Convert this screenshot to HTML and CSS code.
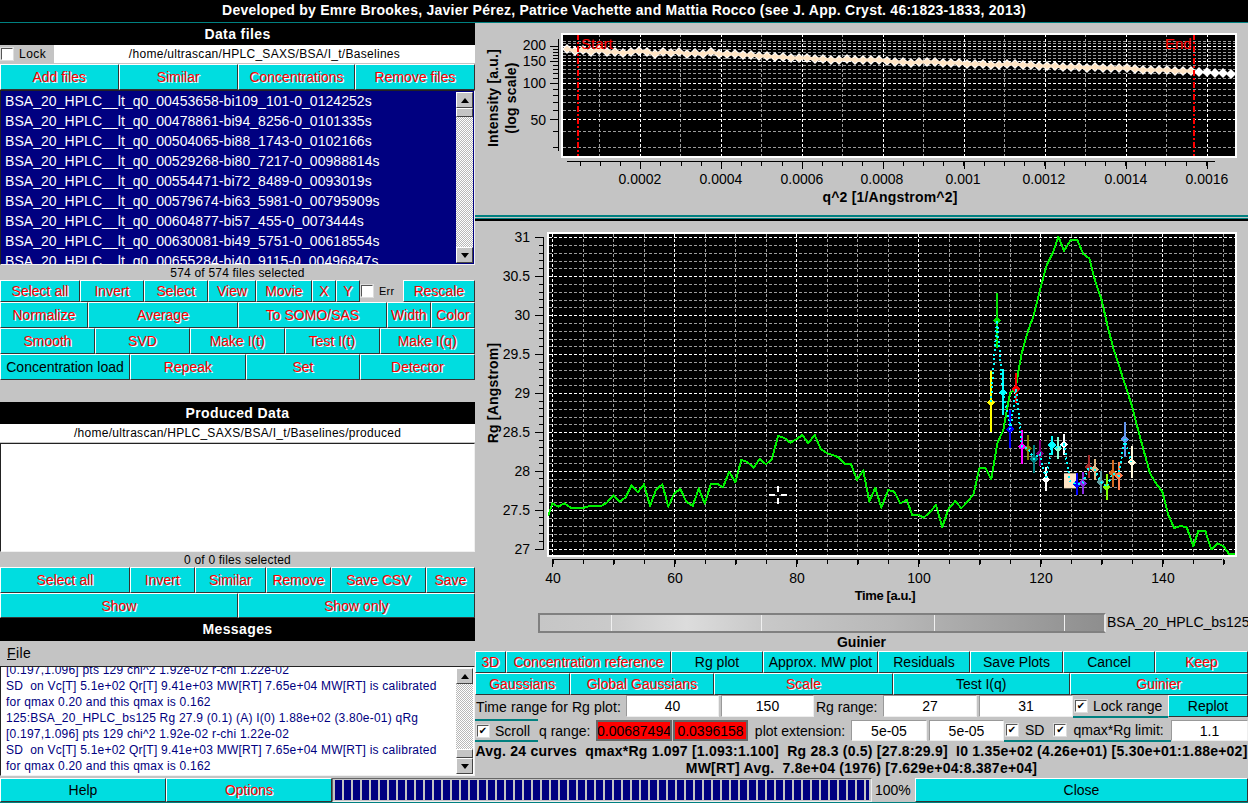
FILE: index.html
```html
<!DOCTYPE html>
<html lang="en">
<head>
<meta charset="utf-8">
<title>HPLC-SAXS</title>
<link rel="stylesheet" href="styles.css">
</head>
<body>
<div class="app">
  <header class="topbar">Developed by Emre Brookes, Javier Pérez, Patrice Vachette and Mattia Rocco (see J. App. Cryst. 46:1823-1833, 2013)</header>
  <div class="middle">
    <section class="left">
      <h2 class="bar bar-data">Data files</h2>
      <div class="lockrow">
        <label class="check lockcheck"><span class="chk"></span>Lock</label>
        <div class="pathline">/home/ultrascan/HPLC_SAXS/BSA/I_t/Baselines</div>
      </div>
      <div class="btnrow r-a">
        <button class="off">Add files</button><button class="off">Similar</button><button class="off">Concentrations</button><button class="off">Remove files</button>
      </div>
      <div class="listbox files">
        <div class="listtext">
          <div>BSA_20_HPLC__lt_q0_00453658-bi109_101-0_0124252s</div>
          <div>BSA_20_HPLC__lt_q0_00478861-bi94_8256-0_0101335s</div>
          <div>BSA_20_HPLC__lt_q0_00504065-bi88_1743-0_0102166s</div>
          <div>BSA_20_HPLC__lt_q0_00529268-bi80_7217-0_00988814s</div>
          <div>BSA_20_HPLC__lt_q0_00554471-bi72_8489-0_0093019s</div>
          <div>BSA_20_HPLC__lt_q0_00579674-bi63_5981-0_00795909s</div>
          <div>BSA_20_HPLC__lt_q0_00604877-bi57_455-0_0073444s</div>
          <div>BSA_20_HPLC__lt_q0_00630081-bi49_5751-0_00618554s</div>
          <div>BSA_20_HPLC__lt_q0_00655284-bi40_9115-0_00496847s</div>
        </div>
        <div class="vscroll">
          <span class="arrow up"></span><span class="thumb"></span><span class="track"></span><span class="arrow down"></span>
        </div>
      </div>
      <div class="status">574 of 574 files selected</div>
      <div class="btnrow r-b">
        <button class="off">Select all</button><button class="off">Invert</button><button class="off">Select</button><button class="off">View</button><button class="off">Movie</button><button class="off">X</button><button class="off">Y</button>
        <label class="check errcheck"><span class="chk"></span>Err</label>
        <button class="off">Rescale</button>
      </div>
      <div class="btnrow r-c">
        <button class="off">Normalize</button><button class="off">Average</button><button class="off">To SOMO/SAS</button><button class="off">Width</button><button class="off">Color</button>
      </div>
      <div class="btnrow r-d">
        <button class="off">Smooth</button><button class="off">SVD</button><button class="off">Make I(t)</button><button class="off">Test I(t)</button><button class="off">Make I(q)</button>
      </div>
      <div class="btnrow r-e">
        <button>Concentration load</button><button class="off">Repeak</button><button class="off">Set</button><button class="off">Detector</button>
      </div>
      <div class="spacer"></div>
      <h2 class="bar bar-prod">Produced Data</h2>
      <div class="pathline prodpath">/home/ultrascan/HPLC_SAXS/BSA/I_t/Baselines/produced</div>
      <div class="listbox produced"></div>
      <div class="status">0 of 0 files selected</div>
      <div class="btnrow r-f">
        <button class="off">Select all</button><button class="off">Invert</button><button class="off">Similar</button><button class="off">Remove</button><button class="off">Save CSV</button><button class="off">Save</button>
      </div>
      <div class="btnrow r-g">
        <button class="off">Show</button><button class="off">Show only</button>
      </div>
      <h2 class="bar bar-msg">Messages</h2>
      <div class="menubar"><u>F</u>ile</div>
      <div class="listbox messages">
        <div class="msgtext">
          <div class="clipline">[0.197,1.096] pts 129 chi^2 1.92e-02 r-chi 1.22e-02</div>
          <div>SD&nbsp; on Vc[T] 5.1e+02 Qr[T] 9.41e+03 MW[RT] 7.65e+04 MW[RT] is calibrated</div>
          <div>for qmax 0.20 and this qmax is 0.162</div>
          <div>125:BSA_20_HPLC_bs125 Rg 27.9 (0.1) (A) I(0) 1.88e+02 (3.80e-01) qRg</div>
          <div>[0.197,1.096] pts 129 chi^2 1.92e-02 r-chi 1.22e-02</div>
          <div>SD&nbsp; on Vc[T] 5.1e+02 Qr[T] 9.41e+03 MW[RT] 7.65e+04 MW[RT] is calibrated</div>
          <div>for qmax 0.20 and this qmax is 0.162</div>
        </div>
        <div class="vscroll">
          <span class="arrow up"></span><span class="track"></span><span class="thumb"></span><span class="arrow down"></span>
        </div>
      </div>
    </section>

    <section class="right">
      <svg class="plot plot1" viewBox="475 23 773 192" width="773" height="192" aria-label="Intensity plot">
        <defs>
          <marker id="diamond" viewBox="-5 -5 10 10" markerWidth="10" markerHeight="10" markerUnits="userSpaceOnUse" overflow="visible">
            <path d="M0-5 5 0 0 5-5 0z" fill="#fff"/>
          </marker>
          <marker id="peachdiamond" viewBox="-4 -4 8 8" markerWidth="8" markerHeight="8" markerUnits="userSpaceOnUse" overflow="visible">
            <path d="M0-3.5 3.5 0 0 3.5-3.5 0z" fill="#ffe4c4"/>
          </marker>
          <clipPath id="clip1"><rect x="563" y="35" width="672" height="121"/></clipPath>
        </defs>
        <rect x="562" y="34" width="674" height="123" fill="#000" stroke="#fff" stroke-width="2"/>
        <g clip-path="url(#clip1)">
          <path class="grid minor" d="M563 147.5H1236M563 131.5H1236M563 110.5H1236M563 102.5H1236M563 95.5H1236M563 89.5H1236M563 78.5H1236M563 73.5H1236M563 69.5H1236M563 65.5H1236M563 58.5H1236M563 55.5H1236M563 52.5H1236M563 49.5H1236M563 43.5H1236M563 41.5H1236M599.5 34V157M680.5 34V157M761.5 34V157M842.5 34V157M923.5 34V157M1004.5 34V157M1085.5 34V157M1166.5 34V157"/>
          <path class="grid major" d="M563 119.5H1236M563 83.5H1236M563 61.5H1236M563 46.5H1236M640.5 34V157M721.5 34V157M802.5 34V157M883.5 34V157M964.5 34V157M1045.5 34V157M1126.5 34V157M1207.5 34V157"/>
          <polyline class="dots" points="567,49 575,51 583,50 591,52 599,50 607,52 615,52 623,53 631,52 639,51 647,52 655,54 663,52 671,53 679,52 687,54 695,53 703,54 711,52 719,54 727,54 735,54 743,55 751,55 759,56 767,56 775,57 783,57 791,58 799,58 807,58 815,59 823,59 831,60 839,60 847,59 855,60 863,60 871,60 879,60 887,61 895,62 903,62 911,63 919,62 927,62 935,62 943,63 951,63 959,63 967,64 975,64 983,64 991,65 999,65 1007,64 1015,64 1023,65 1031,65 1039,66 1047,66 1055,66 1063,67 1071,67 1079,67 1087,68 1095,67 1103,68 1111,68 1119,68 1127,68 1135,69 1143,70 1151,70 1159,70 1167,70 1175,71 1183,71 1191,71 1199,72 1207,72 1215,73 1223,73 1231,74 1239,73"/>
          <polyline class="peach" points="567,49 575,51 583,50 591,52 599,50 607,52 615,52 623,53 631,52 639,51 647,52 655,54 663,52 671,53 679,52 687,54 695,53 703,54 711,52 719,54 727,54 735,54 743,55 751,55 759,56 767,56 775,57 783,57 791,58 799,58 807,58 815,59 823,59 831,60 839,60 847,59 855,60 863,60 871,60 879,60 887,61 895,62 903,62 911,63 919,62 927,62 935,62 943,63 951,63 959,63 967,64 975,64 983,64 991,65 999,65 1007,64 1015,64 1023,65 1031,65 1039,66 1047,66 1055,66 1063,67 1071,67 1079,67 1087,68 1095,67 1103,68 1111,68 1119,68 1127,68 1135,69 1143,70 1151,70 1159,70 1167,70 1175,71 1183,71 1191,71"/>
          <path class="limit" d="M578 34V157M1194 34V157"/>
          <text class="ptext red" x="581" y="49">Start</text>
          <text class="ptext red" x="1165" y="49">End</text>
        </g>
        <path class="axis" d="M558.5 39V151M550 46.5H558M550 61.5H558M550 83.5H558M550 119.5H558M567 161.5H1215M640.5 161V169M721.5 161V169M802.5 161V169M883.5 161V169M964.5 161V169M1045.5 161V169M1126.5 161V169M1207.5 161V169M553 147.5H558M553 131.5H558M553 110.5H558M553 102.5H558M553 95.5H558M553 89.5H558M553 78.5H558M553 73.5H558M553 69.5H558M553 65.5H558M553 58.5H558M553 55.5H558M553 52.5H558M553 49.5H558"/>
        <line class="axis ticks1" x1="579.5" x2="1215" y1="163.5" y2="163.5"/>
        <g class="ptext end">
          <text x="546" y="50">200</text><text x="546" y="66">150</text><text x="546" y="88">100</text><text x="546" y="125">50</text>
        </g>
        <g class="ptext mid">
          <text x="640" y="184">0.0002</text><text x="721" y="184">0.0004</text><text x="802" y="184">0.0006</text><text x="882" y="184">0.0008</text><text x="963" y="184">0.001</text><text x="1044" y="184">0.0012</text><text x="1126" y="184">0.0014</text><text x="1207" y="184">0.0016</text>
        </g>
        <text class="ptext mid title" x="890" y="202">q^2 [1/Angstrom^2]</text>
        <text class="ptext mid title" transform="translate(498 98) rotate(-90)">Intensity [a.u.]</text>
        <text class="ptext mid title" transform="translate(516 98) rotate(-90)">(log scale)</text>
      </svg>

      <div class="splitter"></div>

      <svg class="plot plot2" viewBox="475 221 773 392" width="773" height="392" aria-label="Rg plot">
        <rect x="548" y="233" width="688" height="323" fill="#000" stroke="#fff" stroke-width="2"/>
        <path class="grid minor" d="M549 245.5H1235M549 253.5H1235M549 261.5H1235M549 268.5H1235M549 284.5H1235M549 292.5H1235M549 300.5H1235M549 307.5H1235M549 323.5H1235M549 331.5H1235M549 339.5H1235M549 346.5H1235M549 362.5H1235M549 370.5H1235M549 378.5H1235M549 385.5H1235M549 401.5H1235M549 409.5H1235M549 417.5H1235M549 424.5H1235M549 440.5H1235M549 448.5H1235M549 456.5H1235M549 463.5H1235M549 479.5H1235M549 487.5H1235M549 495.5H1235M549 502.5H1235M549 518.5H1235M549 526.5H1235M549 534.5H1235M549 541.5H1235M583.5 234V555M613.5 234V555M644.5 234V555M705.5 234V555M735.5 234V555M766.5 234V555M827.5 234V555M857.5 234V555M888.5 234V555M949.5 234V555M979.5 234V555M1010.5 234V555M1071.5 234V555M1101.5 234V555M1132.5 234V555M1193.5 234V555M1223.5 234V555"/>
        <path class="grid major" d="M549 237.5H1235M549 276.5H1235M549 315.5H1235M549 354.5H1235M549 393.5H1235M549 432.5H1235M549 471.5H1235M549 510.5H1235M549 549.5H1235M552.5 234V555M674.5 234V555M796.5 234V555M918.5 234V555M1040.5 234V555M1162.5 234V555"/>
        <polyline class="curve" points="548.3,515.7 552.3,503.3 558.3,506.7 564.3,503.3 571,508 577,508 583,508 589.3,506 595.3,506 601.3,506 607.3,502.3 613.3,495.3 619.7,501.7 625.7,497.3 631.7,485.3 637.7,492.3 644,484.3 650,506 656,490 662.3,484.3 668.3,506.7 674.3,493.3 680.3,489 686.3,501.7 692.7,506 698.7,488.3 704.7,503.7 711,483.7 717,483.7 723,487.3 729.3,471.7 735.3,482.3 741.3,460 747.3,462 753.7,467.7 759.7,459 766,464.3 772,459 778,436 784,437.7 790.3,442.7 796.3,439.3 802.3,435 808.3,443.3 814.7,435 820.7,449 826.7,453 832.7,455 838.7,457.3 845,464.3 851,464.3 857,480 863.3,470.3 869.3,501.7 875.3,487.7 881.3,507.7 888.3,490 894.3,491.7 900.3,503.3 906.7,500 912.3,515 918.3,515 923.7,517.7 930.3,511.7 936,505 942.3,527.3 948.3,509.3 955.3,501 961.3,508.3 968.3,501 973.7,493.7 979.3,468.3 985.3,467.7 991.3,479.3 997.3,443.3 1003.3,430 1010,393.3 1015.7,388.3 1018.3,371.7 1021.7,353.3 1028.3,330 1033.3,316.7 1040,290 1046.7,265 1052.7,253.3 1058.3,236.7 1064,250.7 1070.7,240 1077.3,240 1083.3,254 1089.3,258.3 1095.3,281.7 1101.7,300 1107.3,325 1113.3,348.3 1119.3,366.7 1125.7,386.7 1131.7,405 1137.7,428.3 1144,451.7 1150,473.3 1156,483.3 1162.3,491.7 1168.3,515 1174.3,528.3 1180,526 1186.7,527.3 1193.3,546 1198.3,531 1205.3,531 1211.3,549.3 1217.3,543.3 1223.3,546 1229.3,554.3 1235,554.3"/>
        <g class="bars" transform="translate(950 225) scale(.33333)">
          <rect x="342" y="745" width="38" height="45" fill="#ffe4c4"/>
          <path stroke="#ffff00" d="M123 438V622M123 524l8 8-8 8-8-8z"/>
          <path stroke="#00e000" d="M141 205V370M141 278l8 8-8 8-8-8z"/>
          <path stroke="#00ffff" d="M159 432V570M159 494l8 8-8 8-8-8z"/>
          <path stroke="#0000ff" d="M181 555V668M181 605l8 8-8 8-8-8z"/>
          <path stroke="#ff0000" d="M198 445V535M198 484l8 8-8 8-8-8z"/>
          <path stroke="#ff00ff" d="M216 615V716M216 657l8 8-8 8-8-8z"/>
          <path stroke="#808000" d="M234 630V705M234 662l8 8-8 8-8-8z"/>
          <path stroke="#008080" d="M252 660V743M252 694l8 8-8 8-8-8z"/>
          <path stroke="#800080" d="M270 645V722M270 678l8 8-8 8-8-8z"/>
          <path stroke="#ffffff" d="M288 725V797M288 755l8 8-8 8-8-8z"/>
          <path stroke="#00ffff" d="M306 633V690M306 652l8 8-8 8-8-8z"/>
          <path stroke="#7fffd4" d="M324 636V702M324 662l8 8-8 8-8-8z"/>
          <path stroke="#ffffff" d="M342 627V690M342 650l8 8-8 8-8-8z"/>
          <path stroke="#0000ff" d="M380 743V810M380 770l8 8-8 8-8-8z"/>
          <path stroke="#8a2be2" d="M398 740V808M398 767l8 8-8 8-8-8z"/>
          <path stroke="#a52a2a" d="M416 690V760M416 719l8 8-8 8-8-8z"/>
          <path stroke="#deb887" d="M434 702V765M434 725l8 8-8 8-8-8z"/>
          <path stroke="#5f9ea0" d="M452 737V805M452 763l8 8-8 8-8-8z"/>
          <path stroke="#7fff00" d="M470 748V825M470 778l8 8-8 8-8-8z"/>
          <path stroke="#d2691e" d="M488 705V787M488 737l8 8-8 8-8-8z"/>
          <path stroke="#ff7f50" d="M506 712V795M506 744l8 8-8 8-8-8z"/>
          <path stroke="#6495ed" d="M524 592V695M524 635l8 8-8 8-8-8z"/>
          <path stroke="#fff8dc" d="M545 663V760M545 704l8 8-8 8-8-8z"/>
          <polyline class="dotted" points="123,532 141,286 159,502 181,613 198,492 216,665 234,670 252,702 270,686 288,763 306,660 324,670 342,658 360,768 380,778 398,775 416,727 434,733 452,771 470,786 488,745 506,752 524,643 545,712"/>
        </g>
        <path class="cross" d="M769 495H775M781 495H787M778 486V492M778 498V504"/>
        <path class="axis" d="M543.5 237V550M535 237.5H544M535 276.5H544M535 315.5H544M535 354.5H544M535 393.5H544M535 432.5H544M535 471.5H544M535 510.5H544M535 549.5H544M552 559.5H1222M552.5 559V567M674.5 559V567M796.5 559V567M918.5 559V567M1040.5 559V567M1162.5 559V567M613.5 559V565M735.5 559V565M857.5 559V565M979.5 559V565M1101.5 559V565M1223.5 559V565"/>
        <line class="axis ticks2" x1="541.5" x2="541.5" y1="237" y2="550"/>
        <line class="axis ticks3" x1="552.5" x2="1225" y1="561.5" y2="561.5"/>
        <g class="ptext end">
          <text x="530" y="242">31</text><text x="530" y="281">30.5</text><text x="530" y="320">30</text><text x="530" y="359">29.5</text><text x="530" y="398">29</text><text x="530" y="437">28.5</text><text x="530" y="476">28</text><text x="530" y="515">27.5</text><text x="530" y="554">27</text>
        </g>
        <g class="ptext mid">
          <text x="553" y="583">40</text><text x="675" y="583">60</text><text x="797" y="583">80</text><text x="919" y="583">100</text><text x="1041" y="583">120</text><text x="1163" y="583">140</text>
        </g>
        <text class="ptext mid title narrow" x="885" y="600">Time [a.u.]</text>
        <text class="ptext mid title" transform="translate(498 393) rotate(-90)">Rg [Angstrom]</text>
      </svg>

      <div class="scalerow">
        <div class="scalebar"></div>
        <span class="scalename">BSA_20_HPLC_bs125</span>
      </div>
      <div class="guinier">Guinier</div>
      <div class="btnrow r-1">
        <button class="off">3D</button><button class="off">Concentration reference</button><button>Rg plot</button><button>Approx. MW plot</button><button>Residuals</button><button>Save Plots</button><button>Cancel</button><button class="off">Keep</button>
      </div>
      <div class="btnrow r-2">
        <button class="off">Gaussians</button><button class="off">Global Gaussians</button><button class="off">Scale</button><button>Test I(q)</button><button class="off">Guinier</button>
      </div>
      <div class="formrow r-3">
        <span class="lbl wide">Time range for Rg plot:</span>
        <span class="field">40</span><span class="field next">150</span>
        <span class="lbl">Rg range:</span>
        <span class="field">27</span><span class="field next">31</span>
        <label class="check framed"><span class="chk on"></span>Lock range</label>
        <button>Replot</button>
      </div>
      <div class="formrow r-4">
        <label class="check framed both"><span class="chk on"></span>Scroll</label>
        <span class="lbl">q range:</span>
        <span class="field hot">0.00687494</span><span class="field hot near">0.0396158</span>
        <span class="lbl center">plot extension:</span>
        <span class="field">5e-05</span><span class="field next">5e-05</span>
        <div class="framed group">
          <label class="check"><span class="chk on"></span>SD</label>
          <label class="check"><span class="chk on"></span>qmax*Rg limit:</label>
        </div>
        <span class="field">1.1</span>
      </div>
      <div class="summary">Avg. 24 curves&nbsp; qmax*Rg 1.097 [1.093:1.100]&nbsp; Rg 28.3 (0.5) [27.8:29.9]&nbsp; I0 1.35e+02 (4.26e+01) [5.30e+01:1.88e+02]</div>
      <div class="summary">MW[RT] Avg.&nbsp; 7.8e+04 (1976) [7.629e+04:8.387e+04]</div>
    </section>
  </div>
  <footer class="bottom">
    <button>Help</button><button class="off">Options</button>
    <div class="progress"><div class="blocks"></div></div>
    <span class="pct">100%</span>
    <button>Close</button>
  </footer>
</div>
</body>
</html>
```
FILE: styles.css
```css
* { box-sizing: border-box; }
html, body { margin: 0; padding: 0; }
body {
  width: 1248px;
  height: 803px;
  overflow: hidden;
  background: #c4c4c4;
  color: #000;
  font: 14px/1 "Liberation Sans", Arial, sans-serif;
}
.app { display: flex; flex-direction: column; width: 1248px; height: 803px; }
.topbar {
  height: 23px;
  flex: none;
  background: #000;
  border-bottom: 1px solid #008080;
  color: #fff;
  font-weight: bold;
  font-size: 14px;
  letter-spacing: .25px;
  line-height: 21px;
  text-align: center;
}
.middle { display: grid; grid-template-columns: 475px 773px; height: 755px; flex: none; }
.left, .right { display: flex; flex-direction: column; min-width: 0; }

.bar {
  margin: 0;
  background: #000;
  color: #fff;
  font-size: 14px;
  font-weight: bold;
  letter-spacing: .4px;
  text-align: center;
  flex: none;
}
.bar-data { height: 22px; line-height: 22px; }
.bar-prod { height: 22px; line-height: 22px; }
.bar-msg { height: 23px; line-height: 23px; }

.lockrow { display: grid; grid-template-columns: 54px 421px; height: 18px; flex: none; margin-bottom: 1px; }
.pathline {
  background: #fff;
  text-align: center;
  font-size: 12px;
  letter-spacing: .29px;
  line-height: 18px;
}
.prodpath { height: 18px; flex: none; margin-bottom: 1px; }

.check { display: flex; align-items: center; gap: 6px; font-size: 14px; white-space: nowrap; }
.lockcheck { font-size: 12px; padding-left: 1px; letter-spacing: .5px; }
.chk {
  width: 12px;
  height: 12px;
  flex: none;
  background: #fff;
  border: 1px solid;
  border-color: #555 #fff #fff #555;
  box-shadow: 0 0 0 1px #ddd;
  display: block;
  font: bold 10px/10px "DejaVu Sans", sans-serif;
  text-align: center;
}
.chk.on::after { content: "✔"; }
.errcheck { font-size: 11px; padding-left: 1px; gap: 6px; letter-spacing: .2px; }

.btnrow { display: grid; flex: none; }
button {
  margin: 0;
  padding: 0;
  min-width: 0;
  background: #00dde0;
  border: 1px solid;
  border-color: #fff #333 #333 #fff;
  border-radius: 0;
  color: #000;
  font: 14px/1 "Liberation Sans", Arial, sans-serif;
  white-space: nowrap;
  overflow: hidden;
}
button.off { color: #f00; text-shadow: 1px 1px 0 #f4ffff; }

.r-a { height: 26px; grid-template-columns: 118.5px 119.5px 117px 120px; }
.r-b { height: 22px; grid-template-columns: 80px 64px 64px 48px 56px 24px 24px 43px 72px; }
.r-c { height: 26px; grid-template-columns: 88px 150px 149px 44px 44px; }
.r-d { height: 26px; grid-template-columns: 95px 95px 94.5px 95px 95.5px; }
.r-e { height: 26px; grid-template-columns: 130px 116px 114px 115px; }
.r-f { height: 26px; grid-template-columns: 130px 64.7px 71.3px 65px 95px 49px; }
.r-g { height: 25px; grid-template-columns: 238px 237px; }
.r-1 { height: 22px; grid-template-columns: 31px 165px 92px 115px 92px 93px 92px 93px; }
.r-2 { height: 22px; grid-template-columns: 94.6px 144.8px 178.3px 177px 178.3px; }

.spacer { height: 22px; flex: none; }
.status { height: 15px; flex: none; font-size: 12px; letter-spacing: .2px; line-height: 16px; text-align: center; }

.listbox {
  display: flex;
  flex: none;
  background: #fff;
  border: 1px solid;
  border-color: #222 #f0f0f0 #f0f0f0 #222;
  overflow: hidden;
  width: 475px;
}
.files { height: 175px; background: #000080; color: #fff; }
.produced { height: 109px; }
.messages { height: 110px; color: #000080; }
.listtext { flex: 1; padding: 0 0 0 4px; font-size: 14px; letter-spacing: .05px; line-height: 20px; white-space: nowrap; overflow: hidden; }
.msgtext { flex: 1; padding: 0 0 0 5px; font-size: 12px; letter-spacing: .22px; line-height: 16px; white-space: nowrap; overflow: hidden; }
.clipline { margin-top: -5px; }

.vscroll { width: 17px; flex: none; display: flex; flex-direction: column; margin: 1px 1px 1px 0; }
.track {
  flex: 1;
  background: repeating-conic-gradient(#fff 0 25%, #b8b8b8 0 50%) 0 0 / 2px 2px;
}
.thumb, .arrow {
  display: block;
  flex: none;
  background: #c4c4c4;
  border: 1px solid;
  border-color: #fff #444 #444 #fff;
}
.thumb { height: 9px; }
.arrow { height: 16px; display: flex; align-items: center; justify-content: center; }
.arrow::after { content: ""; border-left: 4px solid transparent; border-right: 4px solid transparent; }
.arrow.up::after { border-bottom: 5px solid #000; }
.arrow.down::after { border-top: 5px solid #000; }

.menubar { height: 25px; flex: none; padding-left: 7px; font-size: 14px; letter-spacing: .4px; line-height: 24px; }

.plot { display: block; flex: none; }
.splitter {
  height: 6px;
  flex: none;
  border-top: 2px solid #008080;
  border-bottom: 2px solid #000;
  background: linear-gradient(#c4c4c4 0 1px, #008080 1px);
}
.grid { fill: none; stroke-dasharray: 3 2; shape-rendering: crispEdges; }
.grid.major { stroke: #fff; }
.grid.minor { stroke: #9c9c9c; }
.dots { fill: none; stroke: #fff; stroke-width: 1; marker-start: url(#diamond); marker-mid: url(#diamond); marker-end: url(#diamond); }
.peach { fill: none; stroke: #ffe4c4; stroke-width: 3; marker-start: url(#peachdiamond); marker-mid: url(#peachdiamond); marker-end: url(#peachdiamond); }
.limit { fill: none; stroke: #f00; stroke-width: 2; stroke-dasharray: 6 2 2 2; shape-rendering: crispEdges; }
.axis { fill: none; stroke: #000; stroke-width: 1; shape-rendering: crispEdges; }
.ticks1 { stroke-width: 4; stroke-dasharray: 1 19.2; }
.ticks2 { stroke-width: 5; stroke-dasharray: 1 6.79; }
.ticks3 { stroke-width: 4; stroke-dasharray: 1 29.5; }
.ptext { font: 14px "Liberation Sans", Arial, sans-serif; fill: #000; }
.ptext.red { fill: #f00; font-size: 15px; }
.end { text-anchor: end; }
.mid { text-anchor: middle; }
.title { font-weight: bold; letter-spacing: .2px; }
.title.narrow { font-size: 13px; letter-spacing: -.4px; }
.curve { fill: none; stroke: #00f000; stroke-width: 2; shape-rendering: crispEdges; stroke-linejoin: round; }
.bars path { fill: none; stroke-width: 6; shape-rendering: crispEdges; }
.dotted { fill: none; stroke: #00ffff; stroke-width: 6; stroke-dasharray: 6 8; shape-rendering: crispEdges; }
.cross { fill: none; stroke: #fff; stroke-width: 2; shape-rendering: crispEdges; }

.scalerow { display: grid; grid-template-columns: 63px 568px 142px; height: 20px; flex: none; }
.scalebar {
  grid-column: 2;
  border: 2px solid;
  border-color: #808080 #e4e4e4 #808080 #808080;
  background:
    linear-gradient(90deg, transparent 71px, #f0f0f0 71px 72px, transparent 72px 221px, #f0f0f0 221px 222px, transparent 222px 394px, #f0f0f0 394px 395px, transparent 395px 524px, #f0f0f0 524px 525px, transparent 525px),
    linear-gradient(90deg, #c6c6c6 0, #cacaca 12%, #dcdcdc 26%, #c8c8c8 40%, #b8b8b8 62%, #a4a4a4 80%, #8e8e8e 100%);
}
.scalename { font-size: 14px; line-height: 19px; padding-left: 1px; white-space: nowrap; overflow: hidden; }
.guinier { height: 18px; flex: none; font-size: 14px; font-weight: bold; line-height: 18px; text-align: center; }

.formrow { display: grid; flex: none; align-items: stretch; height: 24px; }
.r-3 { grid-template-columns: 151px 93px 95px 69px 94px 96px 95px 80px; }
.r-4 { grid-template-columns: 63px 58px 76px 76px 103px 76px 77px 167px 77px; }
.lbl { display: flex; align-items: center; padding-left: 1px; font-size: 14px; white-space: nowrap; }
.lbl.center { justify-content: center; }
.lbl.wide { letter-spacing: .1px; }
.r-3 .lbl { padding-left: 2px; }
.r-3 .lbl.wide { padding-left: 1px; }
.field {
  display: flex;
  align-items: center;
  justify-content: center;
  background: #fff;
  border: 1px solid;
  border-color: #999 #eee #eee #999;
  font-size: 14px;
  margin-bottom: 2px;
  white-space: nowrap;
  min-width: 0;
}
.r-4 .field { margin-top: 1px; margin-bottom: 2px; }
.field.next, .r-4 .field.next { margin-left: 2px; }
.field.near, .r-4 .field.near { margin-left: 1px; }
.field.hot { background: #f00; border: 2px solid #666; overflow: hidden; }
.framed { border-bottom: 2px solid #008080; padding-left: 2px; margin-bottom: 1px; }
.framed.both { border-top: 2px solid #008080; }
.group { display: flex; gap: 10px; align-items: center; }
.group .check { gap: 7px; }
.r-3 button { margin-bottom: 2px; }
.summary { height: 17px; flex: none; font-size: 14px; font-weight: bold; letter-spacing: .23px; line-height: 17px; text-align: center; white-space: nowrap; }

.bottom { display: grid; grid-template-columns: 166px 166px 540px 43px 333px; height: 25px; flex: none; border-bottom: 1px solid #008080; }
.progress { border: 1px solid; border-color: #666 #eee #eee #666; padding: 1px 2px; }
.blocks { height: 100%; background: repeating-linear-gradient(90deg, #000080 0 7px, transparent 7px 9px); }
.pct { font-size: 14px; line-height: 24px; padding-left: 3px; }
```
